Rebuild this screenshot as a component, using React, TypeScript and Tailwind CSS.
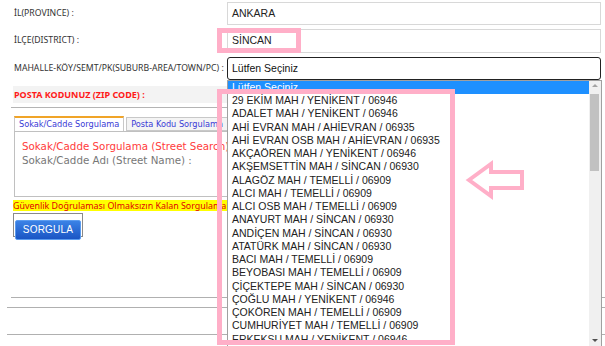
import React from 'react';

const labelFont = { fontFamily: '"Noto Sans", "Open Sans", sans-serif' };

const MAHALLELER = [
  '29 EKİM MAH / YENİKENT / 06946',
  'ADALET MAH / YENİKENT / 06946',
  'AHİ EVRAN MAH / AHİEVRAN / 06935',
  'AHİ EVRAN OSB MAH / AHİEVRAN / 06935',
  'AKÇAÖREN MAH / YENİKENT / 06946',
  'AKŞEMSETTİN MAH / SİNCAN / 06930',
  'ALAGÖZ MAH / TEMELLİ / 06909',
  'ALCI MAH / TEMELLİ / 06909',
  'ALCI OSB MAH / TEMELLİ / 06909',
  'ANAYURT MAH / SİNCAN / 06930',
  'ANDİÇEN MAH / SİNCAN / 06930',
  'ATATÜRK MAH / SİNCAN / 06930',
  'BACI MAH / TEMELLİ / 06909',
  'BEYOBASI MAH / TEMELLİ / 06909',
  'ÇİÇEKTEPE MAH / SİNCAN / 06930',
  'ÇOĞLU MAH / YENİKENT / 06946',
  'ÇOKÖREN MAH / TEMELLİ / 06909',
  'CUMHURİYET MAH / TEMELLİ / 06909',
  'ERKEKSU MAH / YENİKENT / 06946',
];

function Row({ label, children, className = '' }: { label: string; children: React.ReactNode; className?: string }) {
  return (
    <div className={`flex items-center ${className}`}>
      <div className="w-[213px] text-[8.7px] text-[#333] whitespace-nowrap" style={labelFont}>
        {label}
      </div>
      {children}
    </div>
  );
}

export default function App() {
  return (
    <div className="relative w-[605px] h-[346px] overflow-hidden bg-white">
      {/* Form */}
      <div className="pl-[14px] pt-[2px]">
        <Row label="İL(PROVINCE) :" className="h-[23px]">
          <div className="w-[374px] h-full border border-[#d8d8d8] flex items-center pl-[4px] text-[10.5px] text-[#222] font-['Liberation_Sans',Arial,sans-serif]">
            ANKARA
          </div>
        </Row>
        <Row label="İLÇE(DISTRICT) :" className="h-[24px] mt-[4px]">
          <div className="w-[374px] h-full border border-[#d8d8d8] flex items-center pl-[4px] text-[10.5px] text-[#222] font-['Liberation_Sans',Arial,sans-serif]">
            SİNCAN
          </div>
        </Row>
        <Row label="MAHALLE-KÖY/SEMT/PK(SUBURB-AREA/TOWN/PC) :" className="h-[23px] mt-[4px]">
          <div className="w-[374px] h-full border border-[#222] rounded-[3px] flex items-center pl-[4px] text-[10.5px] text-[#111] font-['Liberation_Sans',Arial,sans-serif]">
            Lütfen Seçiniz
          </div>
        </Row>

        {/* Posta kodu */}
        <div className="mt-[6px] ml-[-1px] w-[214px] h-[17px] bg-[#f3f3f3] flex items-center pl-[1px]">
          <span className="text-[9px] font-bold text-[#ff1a1a] whitespace-nowrap" style={labelFont}>
            POSTA KODUNUZ (ZIP CODE) :
          </span>
        </div>
        <div className="mt-[4px] ml-[-3px] w-[216px] h-px bg-[#b4b4b4]" />

        {/* Tabs */}
        <div className="mt-[8px] w-[213px] overflow-hidden font-['DejaVu_Sans',Verdana,sans-serif]">
          <div className="flex items-end h-[15px] w-[300px]">
            <div className="h-[15px] px-[4px] bg-white border border-[#c8c8c8] border-t-2 border-t-[#f0a428] border-b-0 text-[8.2px] text-[#3b3bd6] flex items-center">
              Sokak/Cadde Sorgulama
            </div>
            <div className="ml-[2px] h-[14px] px-[4px] bg-[#f4f4f4] border border-[#c8c8c8] text-[8.2px] text-[#3b3bd6] flex items-center whitespace-nowrap">
              Posta Kodu Sorgulama
            </div>
          </div>
          <div className="w-[300px] h-[66px] border border-[#c0c0c0] px-[7px] pt-[7px]">
            <div className="text-[10.3px] leading-[14px] text-[#ff3b3b] whitespace-nowrap">
              Sokak/Cadde Sorgulama (Street Search)
            </div>
            <div className="text-[10.3px] leading-[14px] text-[#777] whitespace-nowrap">
              Sokak/Cadde Adı (Street Name) :
            </div>
          </div>
        </div>

        {/* Kalan sorgulama */}
        <div className="mt-[3px] ml-[-1px] w-[214px] overflow-hidden h-[11px] bg-[#ffff00] flex items-center">
          <span className="shrink-0 text-[8.9px] text-[#e00000] whitespace-nowrap" style={labelFont}>
            Güvenlik Doğrulaması Olmaksızın Kalan Sorgulama
          </span>
          <span className="shrink-0 ml-[5px] px-[2px] text-[8px] text-[#e00000] bg-[#ffb400] leading-[11px]" style={labelFont}>
            á
          </span>
        </div>

        {/* Button */}
        <div className="mt-[2px] ml-[-1px] w-[70px] h-[24px] border border-[#8a8a8a] p-[1px]">
          <button className="w-full h-full rounded-[2px] border border-[#5b9cf0] bg-gradient-to-b from-[#3b82e6] to-[#1b55c4] text-white text-[10px] tracking-[0.2px] font-['Liberation_Sans',Arial,sans-serif]">
            SORGULA
          </button>
        </div>
      </div>

      {/* Bottom rules */}
      <div className="mt-[60px] ml-[11px] h-px bg-[#b0b0b0]" />
      <div className="mt-[9px] ml-[7px] h-px bg-[#b0b0b0]" />
      <div className="mt-[26px] ml-[7px] h-px bg-[#b0b0b0]" />

      {/* Open dropdown list */}
      <div className="absolute left-[227px] top-[80px] w-[375px] h-[280px] bg-white border border-[#a0a0a0] flex font-['Liberation_Sans',Arial,sans-serif]">
        <div className="flex-1 overflow-hidden text-[10.5px] leading-[13.25px] text-[#222]">
          <div className="bg-[#1e90ff] text-white pl-[4px] h-[13px] leading-[13px]">Lütfen Seçiniz</div>
          {MAHALLELER.map((m) => (
            <div key={m} className="pl-[4px] whitespace-nowrap">
              {m}
            </div>
          ))}
        </div>
        <div className="w-[12px] bg-[#f0f0f0] relative">
          <div className="absolute left-[3px] top-[3px] w-0 h-0 border-l-[3px] border-r-[3px] border-b-[3px] border-l-transparent border-r-transparent border-b-[#a3a3a3]" />
          <div className="absolute left-[1px] top-[13px] w-[9px] h-[77px] bg-[#c1c1c1]" />
          <div className="absolute left-[3px] top-[258px] w-0 h-0 border-l-[3px] border-r-[3px] border-t-[3px] border-l-transparent border-r-transparent border-t-[#505050]" />
        </div>
      </div>

      {/* Annotations */}
      <div className="absolute left-[217px] top-[28px] w-[84px] h-[25px] border-[5px] border-[#ffafc8]" />
      <div className="absolute left-[217px] top-[89px] w-[238px] h-[256px] border-[5px] border-[#ffafc8]" />
      <svg className="absolute left-[465px] top-[160px]" width="60" height="40" viewBox="0 0 60 40">
        <polygon
          points="4,20 26,4 26,12 57,12 57,28 26,28 26,36"
          fill="white"
          stroke="#ffafc8"
          strokeWidth="4"
          strokeLinejoin="miter"
        />
      </svg>
    </div>
  );
}
